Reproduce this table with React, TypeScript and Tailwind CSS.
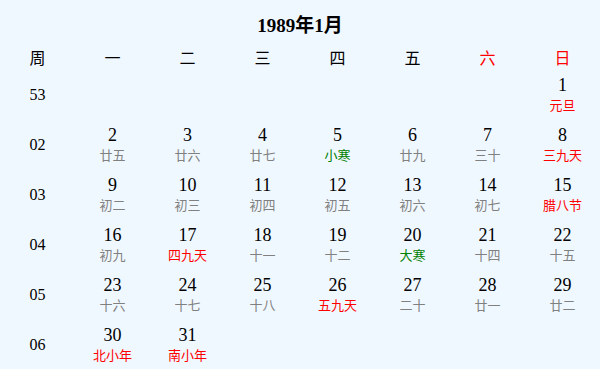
import React from 'react';

type Day = { d: number; l: string; c?: 'red' | 'green' };

const weekdays = ['一', '二', '三', '四', '五', '六', '日'];

// weeks of January 1989, Monday first; null = empty cell
const weeks: { no: string; days: (Day | null)[] }[] = [
  { no: '53', days: [null, null, null, null, null, null, { d: 1, l: '元旦', c: 'red' }] },
  {
    no: '02',
    days: [
      { d: 2, l: '廿五' },
      { d: 3, l: '廿六' },
      { d: 4, l: '廿七' },
      { d: 5, l: '小寒', c: 'green' },
      { d: 6, l: '廿九' },
      { d: 7, l: '三十' },
      { d: 8, l: '三九天', c: 'red' },
    ],
  },
  {
    no: '03',
    days: [
      { d: 9, l: '初二' },
      { d: 10, l: '初三' },
      { d: 11, l: '初四' },
      { d: 12, l: '初五' },
      { d: 13, l: '初六' },
      { d: 14, l: '初七' },
      { d: 15, l: '腊八节', c: 'red' },
    ],
  },
  {
    no: '04',
    days: [
      { d: 16, l: '初九' },
      { d: 17, l: '四九天', c: 'red' },
      { d: 18, l: '十一' },
      { d: 19, l: '十二' },
      { d: 20, l: '大寒', c: 'green' },
      { d: 21, l: '十四' },
      { d: 22, l: '十五' },
    ],
  },
  {
    no: '05',
    days: [
      { d: 23, l: '十六' },
      { d: 24, l: '十七' },
      { d: 25, l: '十八' },
      { d: 26, l: '五九天', c: 'red' },
      { d: 27, l: '二十' },
      { d: 28, l: '廿一' },
      { d: 29, l: '廿二' },
    ],
  },
  {
    no: '06',
    days: [
      { d: 30, l: '北小年', c: 'red' },
      { d: 31, l: '南小年', c: 'red' },
      null,
      null,
      null,
      null,
      null,
    ],
  },
];

const serif = "font-['Liberation_Serif','Noto_Sans_CJK_SC',serif]";
const sans = "font-['Noto_Sans_CJK_SC',sans-serif]";

const lunarColor = (c?: 'red' | 'green') =>
  c === 'red' ? 'text-[#ff0000]' : c === 'green' ? 'text-[#008000]' : 'text-[#808080]';

export default function App() {
  return (
    <div className={`w-[600px] h-[369px] bg-[#f0f8ff] text-black ${serif}`}>
      {/* Title */}
      <div className="h-[48px] flex items-center justify-center pt-[2px]">
        <h3 className="text-[19px] font-bold leading-none">1989年1月</h3>
      </div>

      {/* Weekday header */}
      <div className="grid grid-cols-8 h-[22px] items-center text-[16px] leading-none">
        <div className="text-center">周</div>
        {weekdays.map((w, i) => (
          <div key={w} className={`text-center ${i >= 5 ? 'text-[#ff0000]' : ''}`}>
            {w}
          </div>
        ))}
      </div>

      {/* Weeks */}
      {weeks.map((wk) => (
        <div key={wk.no} className="grid grid-cols-8 h-[50px] items-center">
          <div className="text-center text-[16px] leading-none -mt-[1px]">{wk.no}</div>
          {wk.days.map((day, i) =>
            day ? (
              <div key={i} className="flex flex-col items-center">
                <span className="text-[18px] leading-[20px]">{day.d}</span>
                <span className={`${sans} text-[13px] leading-[20px] ${lunarColor(day.c)}`}>{day.l}</span>
              </div>
            ) : (
              <div key={i} />
            )
          )}
        </div>
      ))}
    </div>
  );
}
